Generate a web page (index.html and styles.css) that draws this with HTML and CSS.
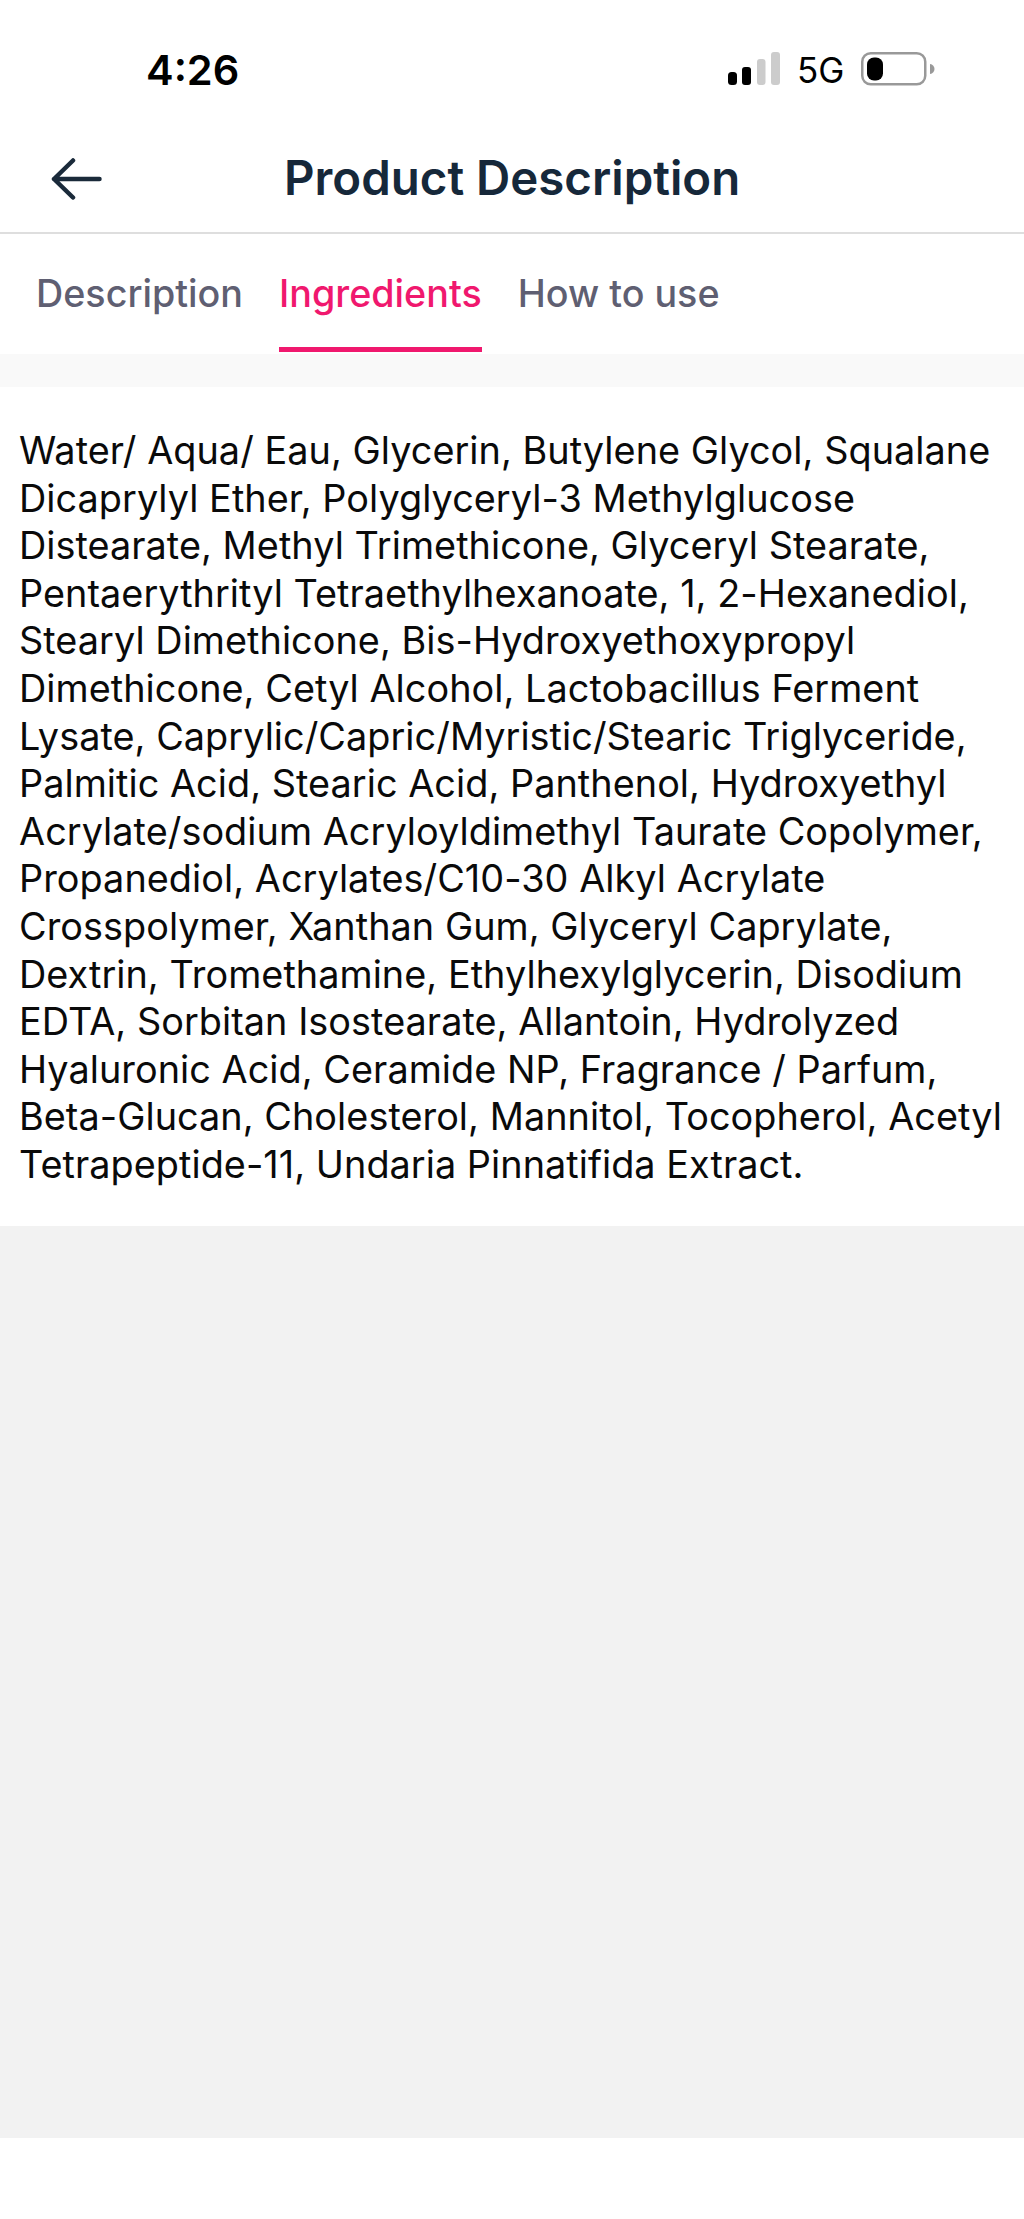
FILE: index.html
```html
<!DOCTYPE html>
<html lang="en">
<head>
<meta charset="utf-8">
<title>Product Description</title>
<link rel="stylesheet" href="styles.css">
</head>
<body>
<div class="screen">
  <div class="status">
    <span class="time">4:26</span>
    <div class="status-right">
      <svg class="signal" width="52" height="33" viewBox="0 0 52 33" aria-hidden="true">
        <rect class="on" x="0" y="20" width="9" height="13" rx="3.5"/>
        <rect class="on" x="14" y="15" width="9" height="18" rx="3"/>
        <rect class="off" x="29" y="7" width="8.5" height="26" rx="3"/>
        <rect class="off" x="43" y="0" width="9" height="33" rx="3"/>
      </svg>
      <span class="net">5G</span>
      <svg class="battery" width="74" height="34" viewBox="0 0 74 34" aria-hidden="true">
        <rect class="shell" x="1.25" y="1.25" width="63" height="31" rx="8.5"/>
        <rect class="level" x="6" y="5.5" width="16" height="23" rx="7"/>
        <path class="nub" d="M69 12c2.800.4 4.500 2.300 4.500 5s-1.700 4.600-4.500 5z"/>
      </svg>
    </div>
  </div>
  <header class="nav">
    <svg class="back" width="52" height="42" viewBox="0 0 52 42" aria-hidden="true">
      <path d="M48.500 21H3M22 2.500 3 21l19 18.500"/>
    </svg>
    <h1 class="title">Product Description</h1>
  </header>
  <nav class="tabs">
    <span class="tab">Description</span>
    <span class="tab active">Ingredients</span>
    <span class="tab">How to use</span>
  </nav>
  <div class="strip"></div>
  <main class="content">
    <p class="ingredients">Water/ Aqua/ Eau, Glycerin, Butylene Glycol, Squalane Dicaprylyl Ether, Polyglyceryl-3 Methylglucose Distearate, Methyl Trimethicone, Glyceryl Stearate, Pentaerythrityl Tetraethylhexanoate, 1, 2-Hexanediol, Stearyl Dimethicone, Bis-Hydroxyethoxypropyl Dimethicone, Cetyl Alcohol, Lactobacillus Ferment Lysate, Caprylic/Capric/Myristic/Stearic Triglyceride, Palmitic Acid, Stearic Acid, Panthenol, Hydroxyethyl Acrylate/sodium Acryloyldimethyl Taurate Copolymer, Propanediol, Acrylates/C10-30 Alkyl Acrylate Crosspolymer, Xanthan Gum, Glyceryl Caprylate, Dextrin, Tromethamine, Ethylhexylglycerin, Disodium EDTA, Sorbitan Isostearate, Allantoin, Hydrolyzed Hyaluronic Acid, Ceramide NP, Fragrance / Parfum, Beta-Glucan, Cholesterol, Mannitol, Tocopherol, Acetyl Tetrapeptide-11, Undaria Pinnatifida Extract.</p>
  </main>
  <div class="empty"></div>
  <div class="bottom"></div>
</div>
</body>
</html>
```
FILE: styles.css
```css
* { box-sizing: border-box; }
html, body { margin: 0; padding: 0; background: #fff; }
body { font-family: Inter, "Noto Sans", sans-serif; }
.screen { width: 1024px; height: 2219px; display: flex; flex-direction: column; overflow: hidden; }
.status { height: 130px; flex: none; display: flex; justify-content: space-between; align-items: flex-start; padding: 46px 89px 0 146px; }
.time { font-size: 41.500px; line-height: 48px; font-weight: 600; color: #000; }
.status-right { display: flex; align-items: flex-start; padding-top: 6px; }
.signal { display: block; margin-right: 17px; }
.signal .on { fill: #000; }
.signal .off { fill: #ccc; }
.net { font-size: 35px; line-height: 33px; color: #000; margin-right: 16px; width: 48px; margin-top: 2px; }
.battery { display: block; }
.shell { fill: none; stroke: #999; stroke-width: 2.5; }
.level { fill: #000; }
.nub { fill: #999; }
.nav { height: 104px; flex: none; display: flex; align-items: center; border-bottom: 2px solid #dedede; padding: 0 0 0 51px; }
.back { display: block; margin-right: 181px; margin-top: -4px; fill: none; stroke: #1a2a3a; stroke-width: 4.500; stroke-linecap: round; stroke-linejoin: round; }
.title { margin: 0; font-size: 47.400px; line-height: 56px; font-weight: 600; color: #16283a; margin-top: -6px; }
.tabs { height: 120px; flex: none; display: flex; gap: 36px; padding: 0 0 0 36px; }
.tab { height: 118px; padding-top: 37px; font-size: 37.700px; line-height: 44px; font-weight: 500; color: #5f5f72; border-bottom: 5px solid transparent; }
.tab.active { color: #f0186e; border-bottom-color: #f0186e; }
.strip { height: 33px; flex: none; background: #f9f9f9; }
.content { flex: none; height: 839px; padding: 40px 20px 0 19px; background: #fff; }
.ingredients { margin: 0; font-size: 37.800px; line-height: 47.600px; color: #0a0a0a; letter-spacing: 0.050px; }
.empty { flex: 1 1 auto; background: #f2f2f2; }
.bottom { height: 81px; flex: none; background: #fff; }
```
